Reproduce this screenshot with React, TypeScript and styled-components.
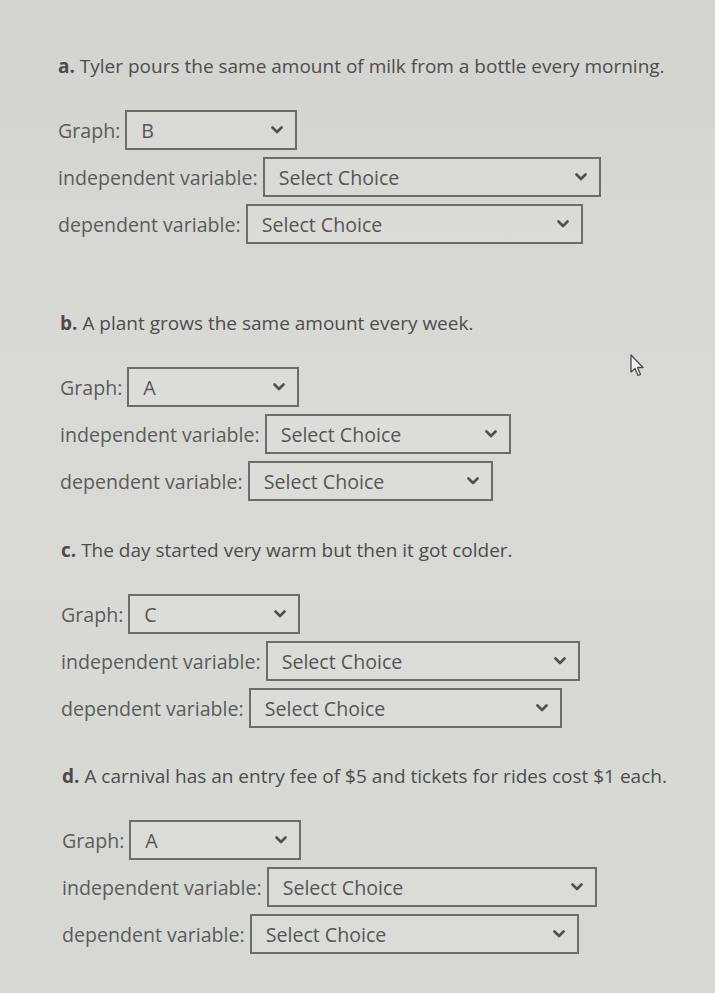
import React from "react";
import styled, { createGlobalStyle } from "styled-components";

const Global = createGlobalStyle`
  html, body { margin: 0; padding: 0; }
  body {
    background: #d7d8d4;
    font-family: "Open Sans", Lato, Arial, sans-serif;
    width: 715px;
    height: 993px;
    overflow: hidden;
  }
`;

const Page = styled.div`
  position: relative;
  width: 715px;
  height: 993px;
  box-sizing: border-box;
  padding: 54px 0 0 58px;
  background: linear-gradient(180deg, #d3d4d0 0%, #d9dad6 40%, #d6d8d4 100%);
`;

const Section = styled.section<{ $after: number; $indent: number }>`
  display: flex;
  flex-direction: column;
  margin-left: ${(p) => p.$indent}px;
  margin-bottom: ${(p) => p.$after}px;
`;

const Title = styled.div`
  font-size: 19px;
  line-height: 24px;
  color: #4c4d4c;
  margin-bottom: 32px;
  white-space: nowrap;
  b {
    font-weight: 700;
    color: #4a4b4a;
  }
`;

const Rows = styled.div`
  display: flex;
  flex-direction: column;
  gap: 7px;
`;

const Row = styled.div`
  display: flex;
  align-items: center;
  gap: 5px;
  height: 40px;
`;

const Label = styled.span`
  font-size: 19.6px;
  color: #5b5c5b;
  white-space: nowrap;
`;

const Box = styled.div<{ $w: number }>`
  box-sizing: border-box;
  width: ${(p) => p.$w}px;
  height: 40px;
  border: 2px solid #6c6d6b;
  display: flex;
  align-items: center;
  justify-content: space-between;
  padding: 0 12px 0 14px;
  font-size: 19.6px;
  color: #555655;
  background: rgba(230, 231, 227, 0.25);
`;

const Chevron = () => (
  <svg width="12" height="8" viewBox="0 0 12 8">
    <path d="M1.5 1.5 L6 6 L10.5 1.5" fill="none" stroke="#4f504f" strokeWidth="2.6" strokeLinecap="round" strokeLinejoin="round" />
  </svg>
);

const Cursor = styled.svg`
  position: absolute;
  left: 630px;
  top: 354px;
`;

const Select = ({ w, value }: { w: number; value: string }) => (
  <Box $w={w}>
    <span>{value}</span>
    <Chevron />
  </Box>
);

type Q = {
  letter: string;
  text: string;
  graph: string;
  indW: number;
  depW: number;
  after: number;
  indent: number;
};

const questions: Q[] = [
  { letter: "a.", text: "Tyler pours the same amount of milk from a bottle every morning.", graph: "B", indW: 338, depW: 337, after: 67, indent: 0 },
  { letter: "b.", text: "A plant grows the same amount every week.", graph: "A", indW: 246, depW: 245, after: 37, indent: 2 },
  { letter: "c.", text: "The day started very warm but then it got colder.", graph: "C", indW: 314, depW: 313, after: 36, indent: 3 },
  { letter: "d.", text: "A carnival has an entry fee of $5 and tickets for rides cost $1 each.", graph: "A", indW: 330, depW: 329, after: 0, indent: 4 },
];

export default function App() {
  return (
    <>
      <Global />
      <Page>
        {questions.map((q) => (
          <Section key={q.letter} $after={q.after} $indent={q.indent}>
            <Title>
              <b>{q.letter}</b> {q.text}
            </Title>
            <Rows>
              <Row>
                <Label>Graph:</Label>
                <Select w={172} value={q.graph} />
              </Row>
              <Row>
                <Label>independent variable:</Label>
                <Select w={q.indW} value="Select Choice" />
              </Row>
              <Row>
                <Label>dependent variable:</Label>
                <Select w={q.depW} value="Select Choice" />
              </Row>
            </Rows>
          </Section>
        ))}
        <Cursor width="16" height="24" viewBox="0 0 16 24">
          <path d="M1 1 L1 18 L5 14.5 L8 21.5 L10.5 20.5 L7.5 13.5 L13 13.5 Z" fill="#f2f2f0" stroke="#4a4a4a" strokeWidth="1.3" strokeLinejoin="round" />
        </Cursor>
      </Page>
    </>
  );
}
